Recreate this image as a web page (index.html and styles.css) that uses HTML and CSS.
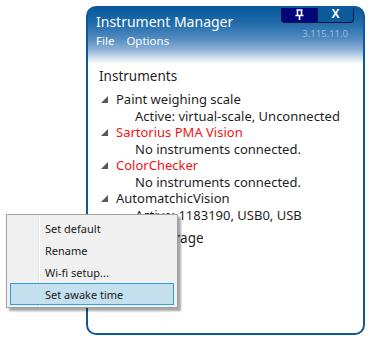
FILE: index.html
```html
<!DOCTYPE html>
<html lang="en">
<head>
    <meta charset="UTF-8">
    <title>Instrument Manager</title>
    <link rel="stylesheet" href="styles.css">
</head>
<body>
    <div class="window">
        <div class="titlebar">
            <div class="title-left">
                <div class="title">Instrument Manager</div>
                <div class="menu">
                    <span>File</span>
                    <span>Options</span>
                </div>
            </div>
            <div class="title-right">
                <div class="buttons">
                    <div class="btn btn-pin">
                        <svg width="11" height="11" viewBox="0 0 11 11">
                            <path d="M2.5 1h6M3.5 1v5M7.5 1v5M1.5 6.5h8M5.5 7v4" stroke="#fff" stroke-width="1.6" fill="none"/>
                        </svg>
                    </div>
                    <div class="btn btn-close">X</div>
                </div>
                <div class="version">3.115.11.0</div>
            </div>
        </div>

        <div class="content">
            <div class="section">Instruments</div>
            <div class="tree">
                <div class="node">
                    <svg class="arrow" width="7" height="7" viewBox="0 0 7 7"><polygon points="7,0 7,7 0,7" fill="#595959"/></svg>
                    <span>Paint weighing scale</span>
                </div>
                <div class="leaf">Active: virtual-scale, Unconnected</div>
                <div class="node red">
                    <svg class="arrow" width="7" height="7" viewBox="0 0 7 7"><polygon points="7,0 7,7 0,7" fill="#595959"/></svg>
                    <span>Sartorius PMA Vision</span>
                </div>
                <div class="leaf">No instruments connected.</div>
                <div class="node red">
                    <svg class="arrow" width="7" height="7" viewBox="0 0 7 7"><polygon points="7,0 7,7 0,7" fill="#595959"/></svg>
                    <span>ColorChecker</span>
                </div>
                <div class="leaf">No instruments connected.</div>
                <div class="node">
                    <svg class="arrow" width="7" height="7" viewBox="0 0 7 7"><polygon points="7,0 7,7 0,7" fill="#595959"/></svg>
                    <span>AutomatchicVision</span>
                </div>
                <div class="leaf">Active: 1183190, USB0, USB</div>
            </div>
            <div class="section section-2">Formula storage</div>
        </div>
    </div>

    <div class="context-menu">
        <div class="item">Set default</div>
        <div class="item">Rename</div>
        <div class="item">Wi-fi setup...</div>
        <div class="item active">Set awake time</div>
    </div>
</body>
</html>
```

FILE: styles.css
```css
body {
    margin: 0;
    padding: 0;
    width: 371px;
    height: 350px;
    background-color: #ffffff;
    font-family: "Noto Sans", "Open Sans", sans-serif;
    position: relative;
    overflow: hidden;
}

.window {
    margin: 6px 0 0 86px;
    width: 275px;
    height: 325px;
    border: 2px solid #0e5896;
    border-radius: 10px;
    background: linear-gradient(to bottom, #0a5a9e 0px, #1e69a9 14px, #4f89bf 30px, #8fb3d6 42px, #d3e2ef 50px, #ffffff 56px);
    overflow: hidden;
}

.titlebar {
    display: flex;
    justify-content: space-between;
    height: 52px;
}

.title-left {
    padding: 4px 0 0 8px;
}

.title {
    color: #ffffff;
    font-size: 14px;
    line-height: 20px;
}

.menu {
    display: flex;
    gap: 12px;
    margin-top: 2px;
    color: #ffffff;
    font-size: 11.5px;
    line-height: 14px;
}

.title-right {
    display: flex;
    flex-direction: column;
    align-items: flex-end;
    padding-right: 9px;
}

.buttons {
    display: flex;
    margin-top: -2px;
}

.btn {
    width: 35px;
    height: 16px;
    border: 1px solid #10143a;
    border-top: none;
    display: flex;
    align-items: center;
    justify-content: center;
    color: #ffffff;
    font-family: "Liberation Sans", Arial, sans-serif;
    font-weight: bold;
    font-size: 12px;
}

.btn-pin {
    background-color: #02067a;
    border-radius: 0 0 0 4px;
    border-right: none;
}

.btn-close {
    background-color: #0c5a9c;
    border-radius: 0 0 4px 0;
}

.version {
    margin-top: 5px;
    margin-right: 6px;
    color: #9dbad6;
    font-size: 9.5px;
    line-height: 12px;
}

.content {
    padding: 6px 0 0 11px;
    color: #1e1e1e;
}

.section {
    font-size: 13.5px;
    line-height: 20px;
}

.section-2 {
    margin-top: 5px;
}

.tree {
    margin-top: 5px;
    font-size: 13px;
    line-height: 16.5px;
}

.node {
    display: flex;
    align-items: center;
}

.arrow {
    margin: 0 8px 0 2px;
}

.red {
    color: #f01414;
}

.leaf {
    padding-left: 36px;
}

.context-menu {
    position: absolute;
    left: 6px;
    top: 214px;
    width: 164px;
    padding: 2px 3px;
    border: 1px solid #a0a0a0;
    background: linear-gradient(to right, #f0f0f0 0, #f0f0f0 31px, #e2e2e2 31px, #e2e2e2 32px, #ffffff 32px, #ffffff 33px, #f0f0f0 33px);
    box-shadow: 3px 3px 2px rgba(0, 0, 0, 0.35);
    font-size: 11px;
    color: #1a1a1a;
}

.item {
    height: 22px;
    line-height: 22px;
    padding-left: 34px;
    border: 1px solid transparent;
    box-sizing: border-box;
}

.item.active {
    background-color: #c4e0ee;
    border-color: #2f9fe0;
}
```
